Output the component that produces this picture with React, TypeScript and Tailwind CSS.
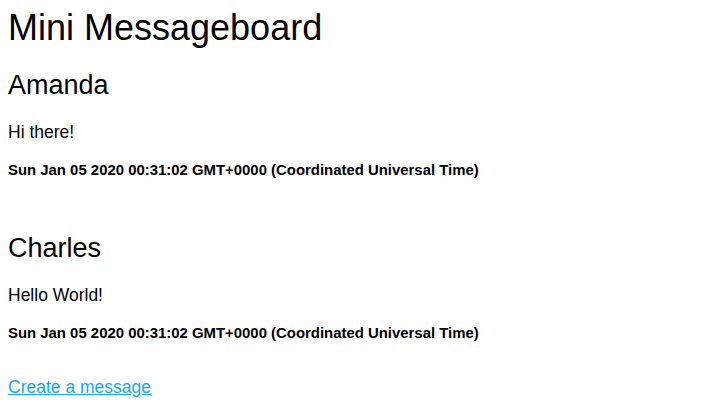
const messages = [
  { user: "Amanda", text: "Hi there!", added: "Sun Jan 05 2020 00:31:02 GMT+0000 (Coordinated Universal Time)" },
  { user: "Charles", text: "Hello World!", added: "Sun Jan 05 2020 00:31:02 GMT+0000 (Coordinated Universal Time)" },
];

export default function App() {
  return (
    <div className="min-h-screen bg-white px-2 pt-[7px] leading-[normal] text-black [font-family:'Liberation_Sans',Arial,sans-serif]">
      <h1 className="text-[36px] font-normal">Mini Messageboard</h1>
      {messages.map((m, i) => (
        <div key={i} className={i === 0 ? "mt-[21px]" : "mt-[55px]"}>
          <h2 className="text-[27px] font-normal">{m.user}</h2>
          <p className="mt-[21px] text-[17.5px]">{m.text}</p>
          <h5 className="mt-[18px] text-[14.92px] font-bold">{m.added}</h5>
        </div>
      ))}
      <a href="#" className="mt-[36px] inline-block text-[17.5px] text-[#14aaf5] underline">
        Create a message
      </a>
    </div>
  );
}
